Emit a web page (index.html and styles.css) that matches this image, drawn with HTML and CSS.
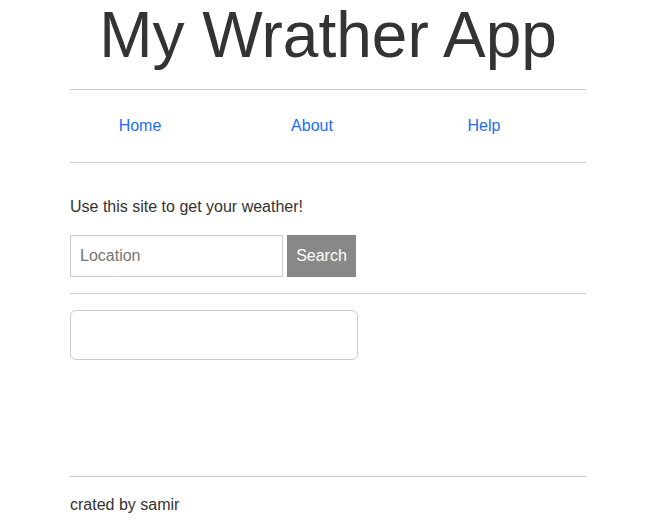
FILE: index.html
```html
<!DOCTYPE html>
<html lang="en">
<head>
<meta charset="utf-8">
<title>My Wrather App</title>
<link rel="stylesheet" href="styles.css">
</head>
<body>
<div class="page">
  <header class="header">
    <h1 class="title">My Wrather App</h1>
    <hr class="rule rule-top">
    <nav class="nav">
      <a class="nav-link" href="#">Home</a>
      <a class="nav-link" href="#">About</a>
      <a class="nav-link" href="#">Help</a>
    </nav>
    <hr class="rule">
  </header>
  <main class="main">
    <p class="intro">Use this site to get your weather!</p>
    <form class="search">
      <input class="search-input" type="text" placeholder="Location">
      <button class="search-btn" type="button">Search</button>
    </form>
    <hr class="rule rule-main">
    <div class="result"></div>
  </main>
  <footer class="footer">
    <hr class="rule">
    <p class="credit">crated by samir</p>
  </footer>
</div>
</body>
</html>
```

FILE: styles.css
```css
html, body {
  margin: 0;
  padding: 0;
  background: #fff;
}

body {
  font-family: "Liberation Sans", Arial, sans-serif;
  font-size: 16px;
  color: #333;
}

.page {
  width: 516px;
  margin-left: 70px;
  padding-top: 3px;
}

.title {
  margin: 0;
  font-size: 64px;
  font-weight: normal;
  line-height: 64px;
  text-align: center;
  color: #333;
}

.rule {
  border: 0;
  border-top: 1px solid #ccc;
  margin: 0;
  height: 0;
}

.rule-top {
  margin-top: 22px;
}

.nav {
  display: grid;
  grid-template-columns: repeat(3, 172px);
  margin-left: -16px;
  height: 72px;
  align-items: center;
  justify-items: center;
}

.nav-link {
  color: #1a6ef5;
  text-decoration: none;
  font-size: 16px;
  line-height: 18px;
}

.main {
  padding-top: 35px;
}

.intro {
  margin: 0;
  line-height: 18px;
}

.search {
  display: flex;
  gap: 4px;
  margin-top: 19px;
}

.search-input {
  box-sizing: border-box;
  width: 213px;
  height: 42px;
  margin: 0;
  padding: 0 9px;
  border: 1px solid #ccc;
  border-radius: 0;
  font-family: "Liberation Sans", Arial, sans-serif;
  font-size: 16px;
  color: #333;
  outline: none;
}

.search-input::placeholder {
  color: #757575;
}

.search-btn {
  box-sizing: border-box;
  width: 69px;
  height: 42px;
  margin: 0;
  padding: 0;
  border: 0;
  background: #888;
  color: #fff;
  font-family: "Liberation Sans", Arial, sans-serif;
  font-size: 16px;
}

.rule-main {
  margin-top: 16px;
}

.result {
  box-sizing: border-box;
  width: 288px;
  height: 50px;
  margin-top: 16px;
  border: 1px solid #ccc;
  border-radius: 6px;
}

.footer {
  margin-top: 116px;
}

.credit {
  margin: 19px 0 0;
  line-height: 18px;
}
```
